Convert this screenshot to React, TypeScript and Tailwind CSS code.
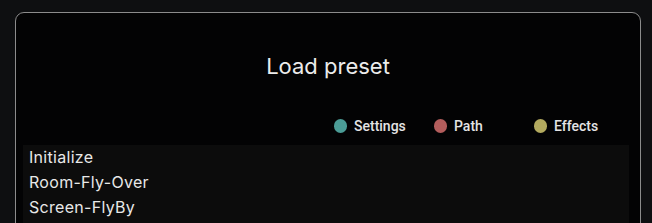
import React from "react";

const legend = [
  { label: "Settings", color: "bg-[#4b9c96]" },
  { label: "Path", color: "bg-[#b35d5c]" },
  { label: "Effects", color: "bg-[#b3aa5f]" },
];

const presets = ["Initialize", "Room-Fly-Over", "Screen-FlyBy"];

export default function App() {
  return (
    <div className="h-[223px] w-[652px] overflow-hidden bg-[#0e0f11] pt-[12px] pl-[15px] pr-[11px]">
      <div className="h-[260px] rounded-[9px] border border-[#8c8c8c] bg-[#030304]">
        <div
          className="pt-[39px] text-center text-[22px] leading-[28px] text-[#ececec]"
          style={{ fontFamily: "Inter, 'Noto Sans', sans-serif" }}
        >
          Load preset
        </div>
        <div
          className="mt-[36px] flex justify-end pr-[6px] text-[14px] font-medium leading-[20px] text-[#e4e4e4]"
          style={{ fontFamily: "Roboto, 'Liberation Sans', sans-serif" }}
        >
          {legend.map((l) => (
            <div key={l.label} className="flex w-[100px] items-center gap-[7px]">
              <span className={`h-[14px] w-[13px] rounded-full ${l.color}`} />
              <span>{l.label}</span>
            </div>
          ))}
        </div>
        <div
          className="ml-[7px] mr-[11px] mt-[9px] h-[200px] bg-[#0c0c0c] text-[16px] leading-[25px] tracking-[0.3px] text-[#e8e8e8]"
          style={{ fontFamily: "Inter, 'Noto Sans', sans-serif" }}
        >
          {presets.map((p) => (
            <div key={p} className="pl-[6px]">
              {p}
            </div>
          ))}
        </div>
      </div>
    </div>
  );
}
